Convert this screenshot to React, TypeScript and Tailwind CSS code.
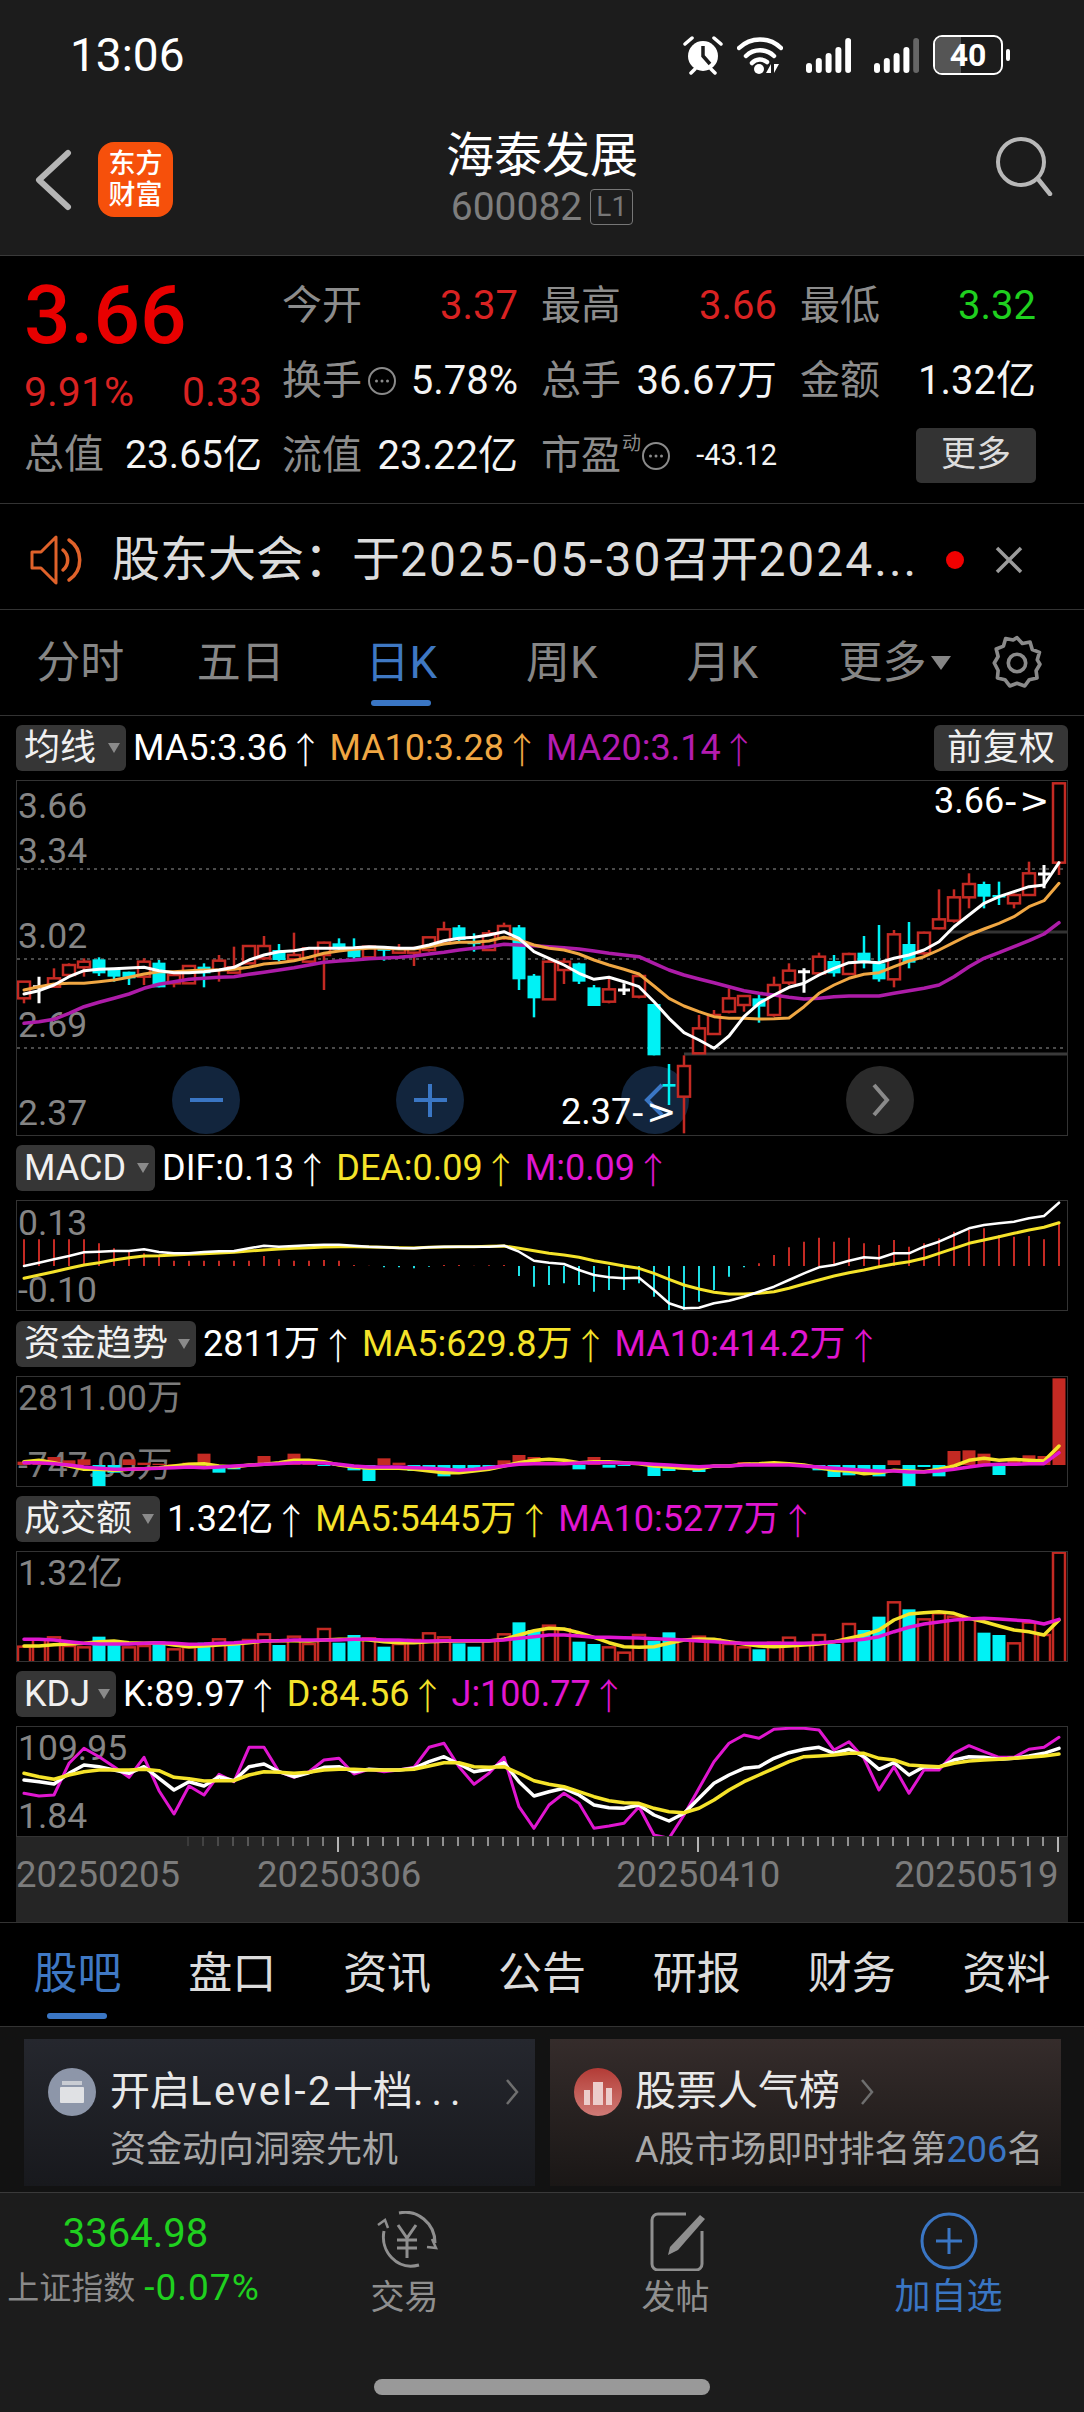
import React from 'react';

const BLUE = '#3a76c4';
const RED = '#c42a23';
const CYAN = '#00f2f5';
const YELLOW = '#f5e32a';
const MAGENTA = '#e016d0';

const xAt = (i: number) => 23 + 15 * i;
const line = (ys: number[], toY: (v: number) => number) =>
  ys.map((v, i) => `${xAt(i)},${toY(v).toFixed(1)}`).join(' ');

// k-line values measured from the reference: [high, bodyTop, bodyBottom, low, type]
type Candle = [number, number, number, number, 'r' | 'c' | 'w'];
const candlesA: Candle[] = [
  [305, 305, 355, 370, 'r'], [290, 320, 320, 370, 'w'], [265, 295, 320, 320, 'r'], [250, 255, 285, 290, 'r'],
  [235, 245, 262, 290, 'r'], [232, 238, 280, 288, 'c'], [265, 270, 290, 305, 'c'], [275, 275, 295, 315, 'c'],
  [235, 245, 290, 315, 'r'], [240, 248, 322, 322, 'c'], [275, 285, 310, 322, 'r'], [255, 258, 310, 310, 'r'],
  [250, 260, 280, 322, 'c'], [225, 242, 270, 305, 'r'], [200, 262, 278, 280, 'r'], [198, 198, 250, 250, 'r'],
  [168, 198, 235, 240, 'r'], [192, 210, 240, 245, 'c'], [158, 225, 238, 240, 'r'], [205, 205, 245, 245, 'r'],
  [185, 188, 225, 330, 'r'], [175, 190, 208, 215, 'c'], [175, 205, 232, 238, 'c'], [200, 200, 232, 232, 'r'],
  [200, 205, 212, 242, 'c'], [192, 205, 218, 220, 'r'], [200, 205, 218, 258, 'r'], [170, 172, 210, 215, 'r'],
  [125, 148, 190, 190, 'r'], [135, 142, 180, 185, 'c'], [160, 185, 192, 215, 'c'], [150, 160, 210, 212, 'r'],
  [128, 138, 175, 180, 'r'], [135, 142, 298, 330, 'c'], [282, 287, 355, 412, 'c'],
];
const candlesB: Candle[] = [
  [535, 545, 658, 660, 'r'], [535, 545, 570, 612, 'r'], [548, 550, 605, 612, 'c'], [615, 622, 678, 678, 'c'],
  [590, 628, 665, 670, 'r'], [610, 630, 630, 645, 'w'], [585, 588, 650, 655, 'r'], [672, 672, 826, 826, 'c'],
  [852, 912, 920, 975, 'c'], [826, 858, 950, 1060, 'r'], [705, 745, 820, 820, 'r'], [690, 705, 762, 765, 'r'],
  [625, 655, 695, 700, 'r'], [645, 648, 675, 695, 'r'], [645, 655, 680, 728, 'c'], [590, 615, 705, 710, 'r'],
  [550, 572, 608, 615, 'r'], [565, 575, 575, 638, 'w'], [518, 530, 580, 582, 'r'], [525, 543, 580, 590, 'c'],
  [518, 522, 582, 585, 'r'], [468, 518, 545, 565, 'c'], [435, 550, 598, 605, 'c'], [450, 463, 598, 622, 'r'],
  [426, 492, 548, 565, 'c'], [455, 458, 520, 525, 'r'], [328, 418, 445, 448, 'r'], [328, 352, 422, 428, 'r'],
  [280, 312, 352, 385, 'r'], [305, 312, 350, 385, 'c'], [305, 345, 352, 375, 'c'], [340, 345, 370, 385, 'r'],
  [245, 280, 345, 348, 'r'], [255, 282, 282, 325, 'w'], [10, 10, 248, 285, 'r'],
];
const ka = (z: number) => 880 + z / 3;
const kb = (z: number) => 780 + z / 3;
const toFull = (c: Candle, f: (z: number) => number): Candle => [f(c[0]), f(c[1]), f(c[2]), f(c[3]), c[4]];
const candles: Candle[] = [...candlesA.map((c) => toFull(c, ka)), ...candlesB.map((c) => toFull(c, kb))];

const join = (a: number[], b: number[]) => [...a.map(ka), ...b.map(kb)];
const ma5 = join(
  [342, 332, 315, 290, 272, 268, 266, 264, 262, 272, 278, 278, 275, 270, 262, 240, 225, 215, 212, 205, 205, 205, 203, 200, 202, 205, 205, 195, 182, 175, 172, 165, 155, 175, 215],
  [535, 555, 580, 598, 592, 605, 620, 665, 715, 758, 780, 805, 768, 710, 670, 645, 622, 610, 585, 565, 548, 545, 548, 535, 525, 510, 485, 440, 405, 370, 350, 335, 320, 315, 248],
);
const ma10 = join(
  [330, 320, 312, 310, 310, 305, 300, 292, 282, 275, 275, 272, 270, 270, 268, 262, 252, 248, 242, 232, 220, 213, 208, 205, 205, 207, 207, 200, 192, 187, 187, 183, 172, 180, 195],
  [505, 510, 522, 540, 555, 568, 582, 618, 655, 678, 695, 710, 715, 715, 717, 716, 714, 680, 640, 615, 595, 583, 578, 560, 543, 530, 510, 487, 465, 447, 430, 410, 380, 362, 310],
);
const ma20 = join(
  [430, 425, 418, 400, 380, 367, 355, 342, 325, 313, 305, 298, 295, 292, 290, 283, 277, 270, 263, 255, 247, 243, 240, 236, 234, 232, 228, 222, 217, 210, 205, 200, 193, 195, 197],
  [500, 503, 507, 513, 520, 525, 530, 550, 570, 585, 597, 608, 620, 632, 640, 645, 652, 657, 655, 650, 648, 648, 648, 640, 632, 625, 615, 590, 560, 535, 518, 500, 482, 462, 428],
);

const y3 = (z: number) => 1140 + z / 3;
const y4 = (z: number) => 1540 + z / 3;
const same = (v: number) => v;

const macdBars = [298, 298, 298, 298, 298, 310, 325, 335, 340, 350, 362, 362, 362, 362, 362, 362, 348, 358, 362, 362, 360, 362, 375, 377, 382, 382, 385, 380, 375, 375, 377, 376, 375, 408, 440, 435, 430, 435, 455, 450, 450, 430, 470, 515, 515, 485, 450, 410, 382, 370, 345, 322, 305, 293, 305, 293, 310, 315, 300, 320, 310, 295, 275, 270, 265, 285, 290, 288, 298, 250];
const macdDif = [378, 368, 358, 348, 337, 335, 333, 333, 328, 336, 340, 340, 336, 334, 333, 325, 317, 320, 318, 316, 314, 314, 317, 320, 322, 324, 325, 322, 320, 320, 320, 320, 317, 335, 362, 368, 372, 390, 405, 412, 415, 413, 450, 490, 505, 503, 490, 482, 470, 455, 440, 420, 400, 382, 375, 362, 352, 355, 340, 340, 320, 305, 285, 265, 255, 250, 245, 235, 228, 188];
const macdDea = [415, 405, 395, 385, 375, 368, 360, 353, 348, 347, 345, 343, 341, 339, 337, 333, 330, 327, 325, 323, 321, 320, 320, 321, 322, 323, 324, 322, 321, 320, 320, 319, 318, 325, 332, 340, 345, 352, 362, 370, 378, 385, 400, 418, 435, 447, 457, 462, 462, 460, 455, 445, 432, 420, 408, 398, 390, 380, 372, 365, 355, 340, 325, 310, 300, 290, 280, 270, 262, 248];

const fundBars = [962, 955, 948, 958, 955, 1043, 995, 955, 965, 968, 970, 965, 938, 995, 985, 975, 945, 965, 938, 955, 975, 975, 988, 1020, 952, 965, 990, 992, 1006, 995, 990, 985, 958, 942, 948, 965, 965, 985, 948, 980, 975, 965, 1005, 990, 985, 993, 980, 975, 963, 965, 975, 965, 975, 988, 1008, 1003, 985, 1006, 958, 1040, 978, 1006, 930, 928, 938, 1002, 955, 943, 945, 712];
const fundMa5 = [962, 958, 965, 975, 985, 985, 988, 985, 983, 980, 975, 970, 968, 975, 978, 972, 970, 965, 958, 958, 962, 972, 978, 982, 982, 982, 985, 990, 995, 995, 990, 985, 975, 965, 958, 955, 958, 965, 962, 962, 965, 968, 975, 978, 982, 983, 975, 975, 970, 968, 965, 968, 972, 980, 988, 990, 998, 995, 988, 990, 992, 985, 975, 958, 952, 958, 955, 958, 960, 915];
const fundMa10 = [965, 965, 968, 972, 978, 982, 985, 985, 983, 982, 980, 978, 980, 978, 975, 973, 970, 968, 965, 965, 966, 970, 975, 978, 978, 978, 980, 982, 985, 988, 985, 980, 975, 970, 968, 968, 968, 966, 965, 965, 966, 967, 970, 972, 975, 977, 975, 975, 972, 972, 972, 972, 975, 978, 982, 985, 988, 990, 990, 993, 993, 990, 985, 978, 972, 970, 970, 968, 968, 935];

const amountBars: [number, 'r' | 'c'][] = [
  [320, 'r'], [298, 'r'], [292, 'r'], [318, 'r'], [322, 'r'], [290, 'c'], [315, 'c'], [322, 'r'], [318, 'r'], [305, 'c'],
  [328, 'r'], [322, 'r'], [308, 'c'], [298, 'r'], [315, 'c'], [300, 'r'], [283, 'r'], [315, 'c'], [290, 'r'], [312, 'r'],
  [267, 'r'], [308, 'c'], [285, 'c'], [295, 'r'], [320, 'c'], [312, 'r'], [300, 'r'], [280, 'r'], [292, 'r'], [310, 'c'],
  [320, 'c'], [302, 'r'], [283, 'r'], [247, 'c'], [270, 'c'], [257, 'r'], [268, 'r'], [305, 'c'], [312, 'c'], [322, 'r'],
  [338, 'r'], [285, 'r'], [302, 'c'], [277, 'c'], [300, 'r'], [290, 'r'], [298, 'r'], [312, 'r'], [322, 'r'], [328, 'c'],
  [308, 'r'], [293, 'r'], [312, 'r'], [285, 'r'], [312, 'c'], [252, 'r'], [270, 'c'], [230, 'c'], [187, 'r'], [208, 'c'],
  [238, 'r'], [220, 'r'], [230, 'r'], [235, 'r'], [278, 'c'], [285, 'c'], [310, 'r'], [248, 'r'], [285, 'r'], [38, 'r'],
];
const amountMa5 = [318, 318, 314, 312, 310, 305, 303, 308, 310, 308, 315, 320, 318, 315, 312, 308, 303, 302, 302, 303, 300, 298, 298, 300, 305, 308, 308, 305, 304, 303, 303, 303, 298, 285, 272, 265, 267, 278, 292, 308, 320, 322, 320, 310, 300, 297, 298, 305, 312, 318, 320, 318, 315, 312, 305, 295, 285, 270, 240, 222, 218, 215, 220, 235, 245, 258, 270, 275, 285, 240];
const amountMa10 = [298, 298, 300, 305, 310, 312, 312, 312, 310, 308, 310, 313, 312, 310, 308, 305, 303, 302, 300, 300, 300, 300, 298, 298, 300, 300, 302, 303, 302, 302, 302, 302, 300, 295, 290, 285, 285, 288, 292, 292, 293, 294, 296, 298, 300, 303, 305, 308, 310, 310, 310, 310, 310, 308, 305, 302, 298, 290, 275, 262, 252, 246, 240, 237, 235, 237, 240, 243, 252, 238];

const kdjK = [720, 725, 732, 700, 675, 680, 690, 700, 680, 715, 750, 725, 738, 710, 722, 680, 672, 695, 710, 698, 682, 680, 695, 688, 690, 690, 685, 665, 650, 672, 695, 688, 668, 725, 768, 755, 745, 765, 795, 803, 805, 795, 825, 843, 820, 775, 730, 705, 685, 680, 655, 638, 628, 622, 640, 628, 650, 688, 668, 705, 680, 682, 660, 650, 652, 658, 655, 648, 640, 625];
const kdjD = [700, 710, 718, 705, 695, 690, 690, 690, 688, 692, 712, 716, 723, 722, 722, 705, 695, 697, 700, 697, 690, 688, 688, 690, 690, 690, 688, 678, 668, 668, 680, 682, 680, 700, 722, 733, 740, 755, 770, 782, 788, 790, 805, 815, 818, 805, 780, 750, 725, 705, 685, 665, 650, 648, 645, 640, 640, 655, 660, 675, 678, 680, 670, 663, 660, 658, 655, 652, 648, 642];
const kdjJ = [760, 768, 765, 670, 625, 650, 680, 712, 652, 752, 822, 738, 765, 703, 725, 622, 622, 695, 712, 695, 660, 655, 702, 688, 695, 690, 682, 622, 610, 680, 733, 700, 652, 800, 865, 795, 760, 790, 865, 858, 850, 800, 885, 895, 825, 745, 665, 610, 585, 595, 568, 565, 565, 570, 630, 605, 655, 750, 680, 760, 690, 690, 640, 617, 635, 652, 652, 628, 622, 592];

function Poly({ ys, toY = same, color, width = 2.5 }: { ys: number[]; toY?: (v: number) => number; color: string; width?: number }) {
  return <polyline points={line(ys, toY)} fill="none" stroke={color} strokeWidth={width} strokeLinejoin="round" strokeLinecap="round" />;
}

function Arrow({ color }: { color: string }) {
  return <span className="font-['Noto_Sans_CJK_SC'] font-light" style={{ color }}>↑</span>;
}

function Legend({ label, width, items }: { label: string; width: string; items: { text: string; color: string }[] }) {
  return (
    <div className="flex items-center h-[46px] pl-[16px] text-[36px]">
      <div className={`${width} h-[46px] rounded-[6px] bg-[#363636] flex items-center justify-between pl-[8px] pr-[5px] text-[#f0f0f0]`}>
        <span>{label}</span>
        <svg width="14" height="12" viewBox="0 0 14 12"><path d="M1 1h12L7 11z" fill="#8a8a8a" /></svg>
      </div>
      <div className="flex items-center gap-[6px] ml-[7px] whitespace-nowrap">
        {items.map((it) => (
          <div key={it.text} className="flex" style={{ color: it.color }}>
            <span>{it.text}</span>
            <Arrow color={it.color} />
          </div>
        ))}
      </div>
    </div>
  );
}

function AxisLabel({ top, text, color = 'text-[#858585]' }: { top: string; text: string; color?: string }) {
  return <span className={`absolute ${top} left-[1px] ${color} text-[35.5px] leading-[40px] whitespace-nowrap`}>{text}</span>;
}

function PriceTag({ pos, price }: { pos: string; price: string }) {
  return (
    <span className={`absolute ${pos} text-white text-[36px] leading-[40px] whitespace-nowrap`}>
      {price}
      <span className="font-['DejaVu_Sans'] font-normal tracking-[2px]">-&gt;</span>
    </span>
  );
}

function SubChart({ top, children, labels }: { top: number; children: React.ReactNode; labels: React.ReactNode }) {
  return (
    <div className="relative mx-[16px] mt-[9px] h-[111px] border border-[#333] bg-black overflow-hidden">
      {labels}
      <svg className="absolute inset-0" width="1052" height="111" viewBox={`16 ${top} 1052 111`}>
        {children}
      </svg>
    </div>
  );
}

function InfoDot() {
  return (
    <svg width="30" height="30" viewBox="0 0 30 30">
      <circle cx="15" cy="15" r="13" fill="none" stroke="#8a8a8a" strokeWidth="2" />
      <circle cx="9.5" cy="15" r="1.5" fill="#8a8a8a" />
      <circle cx="15" cy="15" r="1.5" fill="#8a8a8a" />
      <circle cx="20.5" cy="15" r="1.5" fill="#8a8a8a" />
    </svg>
  );
}

function Cell({ label, value, valueCls = 'text-[#f4f4f4]', extra }: { label: string; value: string; valueCls?: string; extra?: React.ReactNode }) {
  return (
    <div className="flex items-center justify-between h-[75px]">
      <div className="flex items-center gap-[5px]">
        <span className="text-[40px] text-[#8c8c8c]">{label}</span>
        {extra}
      </div>
      <span className={`text-[40px] ${valueCls}`}>{value}</span>
    </div>
  );
}

function Bars({ bars, last = '#fff' }: { bars: number[]; last?: string }) {
  return (
    <svg width="46" height="37" viewBox="0 0 46 37">
      {bars.map((h, i) => (
        <rect key={i} x={1 + i * 9.8} y={36 - h} width="6" height={h} rx="3" fill={i === 4 ? last : '#fff'} />
      ))}
    </svg>
  );
}

function StatusIcons() {
  return (
    <div className="flex items-center pr-[74px]">
      {/* alarm */}
      <svg width="40" height="40" viewBox="0 0 40 40" className="mr-[14px]">
        <circle cx="20" cy="21" r="15" fill="#fff" />
        <path d="M20 11v10l7 8" fill="none" stroke="#1c1c1c" strokeWidth="3.5" />
        <path d="M2 9l7-6M38 9l-7-6M8 38l4-4M32 38l-4-4" stroke="#fff" strokeWidth="3.5" strokeLinecap="round" />
      </svg>
      {/* wifi */}
      <svg width="46" height="38" viewBox="0 0 46 38" className="mr-[22px]">
        <path d="M2 12a30 30 0 0 1 42 0M9 20a20 20 0 0 1 28 0M15 27a11 11 0 0 1 15-1" fill="none" stroke="#fff" strokeWidth="4.5" strokeLinecap="round" />
        <circle cx="22" cy="33" r="5" fill="#fff" />
        <path d="M34 37v-9l-5 9zM37 28v9l5-9z" fill="#fff" />
      </svg>
      {/* signal */}
      <div className="mr-[22px]"><Bars bars={[10, 15, 20, 26, 35]} /></div>
      <div className="mr-[14px]"><Bars bars={[10, 15, 20, 26, 35]} last="#666" /></div>
      {/* battery */}
      <div className="relative w-[70px] h-[40px] rounded-[9px] border-[2.5px] border-white flex items-center justify-center overflow-hidden">
        <div className="absolute left-0 top-0 bottom-0 w-[26px] bg-[#555]" />
        <span className="relative text-[32px] font-bold text-white leading-none">40</span>
      </div>
      <div className="ml-[3px] w-[4px] h-[12px] rounded-full bg-white" />
    </div>
  );
}

function RoundButtons() {
  return (
    <g>
      <circle cx="205" cy="1100" r="34" fill="#12253d" />
      <path d="M189 1100h33" stroke={BLUE} strokeWidth="4" />
      <circle cx="429" cy="1100" r="34" fill="#12253d" />
      <path d="M413 1100h33M429 1084v33" stroke={BLUE} strokeWidth="4" />
      <circle cx="654" cy="1100" r="34" fill="#12253d" />
      <path d="M661 1085l-15 15 15 15" fill="none" stroke={BLUE} strokeWidth="4" />
      <circle cx="879" cy="1100" r="34" fill="#2a2a2a" />
      <path d="M873 1085l13 15-13 15" fill="none" stroke="#8a8a8a" strokeWidth="4" />
    </g>
  );
}

function CandleChart() {
  return (
    <div className="relative mx-[16px] h-[356px] border border-[#333] bg-black overflow-hidden">
      <AxisLabel top="top-[5px]" text="3.66" />
      <AxisLabel top="top-[50px]" text="3.34" />
      <AxisLabel top="top-[135px]" text="3.02" />
      <AxisLabel top="top-[224px]" text="2.69" />
      <AxisLabel top="top-[312px]" text="2.37" />
      <svg className="absolute inset-0" width="1052" height="356" viewBox="16 781 1052 356">
        {[869, 959, 1048].map((y) => (
          <line key={y} x1="16" x2="1068" y1={y} y2={y} stroke="#4a4a4a" strokeWidth="2" strokeDasharray="3 4" />
        ))}
        <line x1="946" x2="1068" y1="932" y2="932" stroke="#333" strokeWidth="3" />
        <line x1="683" x2="1068" y1="1054" y2="1054" stroke="#3a3a3a" strokeWidth="3" />
        <RoundButtons />
        {candles.map(([hi, top, bottom, lo, kind], i) => {
          const x = xAt(i);
          if (kind === 'w') {
            return <path key={i} d={`M${x} ${hi}V${lo}M${x - 6} ${top}h12`} stroke="#fff" strokeWidth="3" />;
          }
          const color = kind === 'r' ? RED : CYAN;
          return (
            <g key={i}>
              <line x1={x} x2={x} y1={hi} y2={lo} stroke={color} strokeWidth="2.5" />
              {kind === 'r' ? (
                <rect x={x - 6} y={top} width="12" height={Math.max(bottom - top, 2)} fill="#000" stroke={RED} strokeWidth="2.5" />
              ) : (
                <rect x={x - 6.5} y={top} width="13" height={Math.max(bottom - top, 2.5)} fill={CYAN} />
              )}
            </g>
          );
        })}
        <Poly ys={ma20} color="#ad1ca8" width={3.5} />
        <Poly ys={ma10} color="#f0a743" width={3} />
        <Poly ys={ma5} color="#ffffff" width={3} />
      </svg>
      <PriceTag pos="top-[0px] left-[917px]" price="3.66" />
      <PriceTag pos="top-[311px] left-[544px]" price="2.37" />
    </div>
  );
}

function TimeAxis() {
  const ticks = Array.from({ length: 59 }, (_, k) => k + 11);
  return (
    <div className="mx-[16px] h-[85px] bg-[#252525] overflow-hidden">
      <svg className="block" width="1052" height="16" viewBox="16 0 1052 16">
        {ticks.map((i) => {
          const long = i === 21 || i === 45 || i === 69;
          return (
            <line key={i} x1={xAt(i)} x2={xAt(i)} y1="0" y2={long ? 15 : 9} stroke="#b5b5b5" strokeWidth="2" opacity={i < 21 ? 0.15 + (i - 11) * 0.05 : long ? 1 : 0.75} />
          );
        })}
      </svg>
      <div className="flex text-[36.5px] leading-[44px] text-[#7c7c7c]">
        <span>20250205</span>
        <span className="ml-[77px]">20250306</span>
        <span className="ml-[195px]">20250410</span>
        <span className="ml-[114px]">20250519</span>
      </div>
    </div>
  );
}

export default function App() {
  return (
    <div className="w-[1084px] h-[2412px] bg-black overflow-hidden font-['Roboto','Noto_Sans_CJK_SC',sans-serif]">
      {/* Header */}
      <div className="h-[256px] bg-[#1c1c1c] border-b border-[#3a3a3a]">
        <div className="h-[110px] flex items-center justify-between pl-[70px]">
          <span className="text-[46px] text-white">13:06</span>
          <StatusIcons />
        </div>
        <div className="h-[145px] grid grid-cols-[1fr_auto_1fr] items-start">
          <div className="flex items-center pl-[35px] pt-[32px]">
            <svg width="38" height="62" viewBox="0 0 38 62">
              <path d="M33 4L4 31l29 27" fill="none" stroke="#b5b5b5" strokeWidth="6" strokeLinecap="round" strokeLinejoin="round" />
            </svg>
            <div className="ml-[25px] w-[75px] h-[75px] rounded-[16px] bg-[#f6500b] flex flex-col items-center justify-center text-white text-[27px] leading-[31px] font-medium">
              <span>东方</span>
              <span>财富</span>
            </div>
          </div>
          <div className="flex flex-col items-center pt-[19px]">
            <span className="text-[48px] leading-[54px] text-white">海泰发展</span>
            <div className="flex items-center mt-[1px] gap-[8px]">
              <span className="text-[39px] leading-[46px] text-[#7d7d7d]">600082</span>
              <span className="w-[43px] h-[36px] border border-[#777] rounded-[4px] text-[28px] leading-[34px] text-center text-[#777]">L1</span>
            </div>
          </div>
          <div className="flex justify-end pr-[30px] pt-[26px]">
            <svg width="60" height="60" viewBox="0 0 60 60">
              <circle cx="27" cy="26" r="23" fill="none" stroke="#b8b8b8" strokeWidth="4" />
              <path d="M44 43l12 15" stroke="#b8b8b8" strokeWidth="4.5" strokeLinecap="round" />
            </svg>
          </div>
        </div>
      </div>

      {/* Quote */}
      <div className="h-[248px] border-b border-[#333] flex pl-[24px]">
        <div className="w-[258px] shrink-0">
          <div className="mt-[18px] text-[82px] leading-[82px] font-medium text-[#e80000]">3.66</div>
          <div className="mt-[13px] pr-[20px] flex justify-between text-[41px] leading-[46px] text-[#d92222]">
            <span>9.91%</span>
            <span>0.33</span>
          </div>
          <div className="mt-[17px] pr-[20px] flex justify-between items-center h-[46px]">
            <span className="text-[40px] text-[#8c8c8c]">总值</span>
            <span className="text-[39px] text-[#f4f4f4]">23.65亿</span>
          </div>
        </div>
        <div className="pt-[12px] grid grid-cols-[236px_236px_236px] gap-x-[23px] content-start">
          <Cell label="今开" value="3.37" valueCls="text-[#d92222]" />
          <Cell label="最高" value="3.66" valueCls="text-[#d92222]" />
          <Cell label="最低" value="3.32" valueCls="text-[#1fd01f]" />
          <Cell label="换手" value="5.78%" extra={<InfoDot />} />
          <Cell label="总手" value="36.67万" />
          <Cell label="金额" value="1.32亿" />
          <Cell label="流值" value="23.22亿" />
          <div className="flex items-center justify-between h-[75px]">
            <div className="flex items-center">
              <span className="text-[40px] text-[#8c8c8c]">市盈</span>
              <span className="text-[19px] text-[#8c8c8c] self-start mt-[4px] ml-[1px]">动</span>
              <InfoDot />
            </div>
            <span className="text-[29px] text-[#f4f4f4]">-43.12</span>
          </div>
          <div className="flex items-center justify-end h-[75px]">
            <span className="w-[120px] h-[55px] rounded-[5px] bg-[#333] flex items-center justify-center text-[35px] text-[#ddd]">更多</span>
          </div>
        </div>
      </div>

      {/* Notice */}
      <div className="h-[106px] border-b border-[#333] flex items-center pl-[30px] pt-[6px]">
        <svg width="52" height="56" viewBox="0 0 52 56" className="shrink-0">
          <path d="M2 20h9L26 5v46L11 36H2z" fill="none" stroke="#e0622a" strokeWidth="3" strokeLinejoin="round" />
          <path d="M33 18a13 13 0 0 1 0 20M39 8a24 24 0 0 1 0 40" fill="none" stroke="#e0622a" strokeWidth="3.5" strokeLinecap="round" />
        </svg>
        <span className="ml-[30px] w-[806px] text-[48px] text-[#dcdcdc] whitespace-nowrap">
          股东大会：于<span className="tracking-[2px]">2025-05-30</span>召开<span className="tracking-[2px]">2024...</span>
        </span>
        <span className="ml-[28px] w-[18px] h-[18px] rounded-full bg-[#f00000]" />
        <svg width="30" height="30" viewBox="0 0 30 30" className="ml-[30px]">
          <path d="M3 3l24 24M27 3L3 27" stroke="#9a9a9a" strokeWidth="3.5" />
        </svg>
      </div>

      {/* Period tabs */}
      <div className="h-[106px] border-b border-[#333] flex items-center text-[44px] text-[#868686]">
        {['分时', '五日', '日K', '周K', '月K'].map((t) => (
          <div key={t} className="relative w-[160.5px] h-full flex items-center justify-center">
            <span className={t === '日K' ? 'text-[#3f78c3]' : ''}>{t}</span>
            {t === '日K' && <span className="absolute left-[50px] bottom-[9px] w-[60px] h-[6px] rounded-[3px] bg-[#3a76c4]" />}
          </div>
        ))}
        <div className="ml-[36px] flex items-center">
          <span>更多</span>
          <svg width="22" height="16" viewBox="0 0 22 16" className="ml-[3px]"><path d="M1 1h20L11 15z" fill="#868686" /></svg>
        </div>
        <svg width="58" height="58" viewBox="0 0 24 24" className="ml-[36px]" fill="none" stroke="#8a8a8a" strokeWidth="1.5">
          <path d="M12 1.5l2.2 2.4 3.2-.6.9 3.1 3 1.2-.9 3.1 1.1 1.8-1.6 2.7.4 3-3.2.7-1.9 2.6-3.2-1.1-3 1.1-2-2.6-3.1-.7.3-3.1L2.6 12l1.6-2.7-.8-3.1 3-1.2.9-3.1 3.1.6z" strokeLinejoin="round" />
          <circle cx="12" cy="12" r="3.6" />
        </svg>
      </div>

      {/* K-line */}
      <div className="flex items-center justify-between h-[46px] mt-[9px] pr-[16px]">
        <Legend
          label="均线"
          width="w-[110px]"
          items={[
            { text: 'MA5:3.36', color: '#ffffff' },
            { text: 'MA10:3.28', color: '#f0a743' },
            { text: 'MA20:3.14', color: '#b41cb0' },
          ]}
        />
        <span className="w-[134px] h-[46px] rounded-[6px] bg-[#363636] flex items-center justify-center text-[36px] text-[#f0f0f0]">前复权</span>
      </div>
      <div className="h-[9px]" />
      <CandleChart />

      <div className="h-[9px]" />
      <Legend
        label="MACD"
        width="w-[139px]"
        items={[
          { text: 'DIF:0.13', color: '#ffffff' },
          { text: 'DEA:0.09', color: YELLOW },
          { text: 'M:0.09', color: MAGENTA },
        ]}
      />
      <SubChart
        top={1201}
        labels={
          <>
            <AxisLabel top="top-[2px]" text="0.13" />
            <AxisLabel top="top-[69px]" text="-0.10" />
          </>
        }
      >
        {macdBars.map((v, i) => (
          <line key={i} x1={xAt(i)} x2={xAt(i)} y1={y3(378)} y2={y3(v)} stroke={v < 378 ? RED : '#1fe0e6'} strokeWidth="2" />
        ))}
        <Poly ys={macdDea} toY={y3} color={YELLOW} width={3} />
        <Poly ys={macdDif} toY={y3} color="#ffffff" width={2.5} />
      </SubChart>

      <div className="h-[10px]" />
      <Legend
        label="资金趋势"
        width="w-[180px]"
        items={[
          { text: '2811万', color: '#ffffff' },
          { text: 'MA5:629.8万', color: YELLOW },
          { text: 'MA10:414.2万', color: MAGENTA },
        ]}
      />
      <SubChart
        top={1376}
        labels={
          <>
            <AxisLabel top="top-[1px]" text="2811.00万" color="text-[#7c7c7c]" />
            <AxisLabel top="top-[68px]" text="-747.00万" color="text-[#7c7c7c]" />
          </>
        }
      >
        {fundBars.map((v, i) => {
          const up = v < 972;
          const a = y3(Math.min(v, 972));
          const b = y3(Math.max(v, 972));
          return <rect key={i} x={xAt(i) - 6.5} y={a} width="13" height={b - a} fill={up ? RED : CYAN} />;
        })}
        <Poly ys={fundMa5} toY={y3} color={YELLOW} width={3.5} />
        <Poly ys={fundMa10} toY={y3} color={MAGENTA} width={3.5} />
      </SubChart>

      <div className="h-[9px]" />
      <Legend
        label="成交额"
        width="w-[144px]"
        items={[
          { text: '1.32亿', color: '#ffffff' },
          { text: 'MA5:5445万', color: YELLOW },
          { text: 'MA10:5277万', color: MAGENTA },
        ]}
      />
      <SubChart top={1552} labels={<AxisLabel top="top-[1px]" text="1.32亿" />}>
        {amountBars.map(([v, kind], i) => {
          const top = y4(v);
          const bottom = y4(368);
          return kind === 'r' ? (
            <rect key={i} x={xAt(i) - 6} y={top} width="12" height={bottom - top} fill="none" stroke={RED} strokeWidth="2.5" />
          ) : (
            <rect key={i} x={xAt(i) - 6.5} y={top} width="13" height={bottom - top} fill={CYAN} />
          );
        })}
        <Poly ys={amountMa5} toY={y4} color={YELLOW} width={3.5} />
        <Poly ys={amountMa10} toY={y4} color={MAGENTA} width={3.5} />
      </SubChart>

      <div className="h-[9px]" />
      <Legend
        label="KDJ"
        width="w-[100px]"
        items={[
          { text: 'K:89.97', color: '#ffffff' },
          { text: 'D:84.56', color: YELLOW },
          { text: 'J:100.77', color: MAGENTA },
        ]}
      />
      <SubChart
        top={1727}
        labels={
          <>
            <AxisLabel top="top-[1px]" text="109.95" />
            <AxisLabel top="top-[69px]" text="1.84" />
          </>
        }
      >
        <Poly ys={kdjJ} toY={y4} color={MAGENTA} width={3} />
        <Poly ys={kdjK} toY={y4} color="#ffffff" width={3.5} />
        <Poly ys={kdjD} toY={y4} color={YELLOW} width={3.5} />
      </SubChart>
      <TimeAxis />

      {/* Content tabs */}
      <div className="relative h-[105px] border-t border-b border-[#333] grid grid-cols-7 text-[44px] text-[#dcdcdc]">
        {['股吧', '盘口', '资讯', '公告', '研报', '财务', '资料'].map((t, i) => (
          <div key={t} className={`flex justify-center pt-[24px] leading-[54px] ${i === 0 ? 'text-[#3f78c3]' : ''}`}>{t}</div>
        ))}
        <span className="absolute left-[47px] top-[90px] w-[60px] h-[6px] rounded-[3px] bg-[#3a76c4]" />
      </div>

      {/* Banners */}
      <div className="h-[165px] bg-[#121212] flex gap-[15px] pl-[24px] pt-[12px]">
        <div className="w-[511px] h-[147px] bg-gradient-to-b from-[#25272e] to-[#18191d] pt-[29px] pl-[24px]">
          <div className="flex items-center h-[48px]">
            <span className="w-[48px] h-[48px] rounded-full bg-[#8d96a9] flex items-center justify-center">
              <svg width="26" height="22" viewBox="0 0 26 22">
                <rect x="3" y="0" width="20" height="4" fill="#c9ccd3" />
                <rect x="1" y="6" width="24" height="16" rx="1" fill="#e0e1e4" />
              </svg>
            </span>
            <span className="ml-[14px] w-[395px] text-[40px] text-[#e8e8e8] whitespace-nowrap">
              开启<span className="tracking-[2.4px]">Level-2</span>十档<span className="tracking-[8px]">...</span>
            </span>
            <svg width="14" height="28" viewBox="0 0 14 28"><path d="M2 2l10 12L2 26" fill="none" stroke="#6f6f6f" strokeWidth="2.5" /></svg>
          </div>
          <div className="mt-[12px] pl-[62px] text-[36px] leading-[44px] text-[#a8a8a8]">资金动向洞察先机</div>
        </div>
        <div className="w-[511px] h-[147px] bg-gradient-to-b from-[#352c2b] to-[#1a1716] pt-[29px] pl-[24px]">
          <div className="flex items-center h-[48px]">
            <span className="w-[48px] h-[48px] rounded-full bg-gradient-to-b from-[#b33b36] to-[#cf7a76] flex items-center justify-center">
              <svg width="28" height="26" viewBox="0 0 28 26">
                <path d="M0 11h6v15H0zM9 3h10v23H9zM22 9h6v17h-6z" fill="#eccdcb" />
              </svg>
            </span>
            <span className="ml-[13px] text-[41px] text-[#e8e8e8] whitespace-nowrap">股票人气榜</span>
            <svg width="14" height="28" viewBox="0 0 14 28" className="ml-[20px]"><path d="M2 2l10 12L2 26" fill="none" stroke="#6f6f6f" strokeWidth="2.5" /></svg>
          </div>
          <div className="mt-[12px] pl-[61px] text-[36px] leading-[44px] text-[#a8a8a8] whitespace-nowrap">
            A股市场即时排名第<span className="text-[#3a76c4]">206</span>名
          </div>
        </div>
      </div>

      {/* Bottom bar */}
      <div className="relative h-[220px] bg-[#1c1c1c] border-t border-[#3a3a3a] grid grid-cols-4">
        <div className="flex flex-col items-center pt-[18px]">
          <span className="text-[40px] leading-[46px] text-[#1fd01f]">3364.98</span>
          <div className="mt-[9px] -ml-[4px] flex items-center whitespace-nowrap leading-[44px]">
            <span className="text-[32px] text-[#8a8a8a]">上证指数</span>
            <span className="ml-[9px] text-[37px] tracking-[1px] text-[#1fd01f]">-0.07%</span>
          </div>
        </div>
        <div className="flex flex-col items-center pt-[18px]">
          <svg width="64" height="60" viewBox="0 0 64 60" fill="none" stroke="#8f8f8f" strokeWidth="3">
            <path d="M9 20C5 40 22 60 44 54M24 2C42 -2 60 12 60 32" />
            <path d="M3 14l7-5 3 8M52 36l9 1-4-9" strokeWidth="2.5" />
            <path d="M23 14l9 13 9-13M32 27v20M22 29h20M22 37h20" />
          </svg>
          <span className="mt-[4px] -ml-[4px] text-[34px] leading-[44px] text-[#8f8f8f]">交易</span>
        </div>
        <div className="flex flex-col items-center pt-[18px]">
          <svg width="60" height="60" viewBox="0 0 60 60" fill="none" stroke="#8f8f8f" strokeWidth="3">
            <path d="M38 3H10a6 6 0 0 0-6 6v44a6 6 0 0 0 6 6h38a6 6 0 0 0 6-6V20" />
            <path d="M22 36L52 4l5 4-27 31-10 5z" fill="#8f8f8f" stroke="none" />
          </svg>
          <span className="mt-[4px] -ml-[4px] text-[34px] leading-[44px] text-[#8f8f8f]">发帖</span>
        </div>
        <div className="flex flex-col items-center pt-[18px]">
          <svg width="60" height="60" viewBox="0 0 60 60" fill="none" stroke={BLUE} strokeWidth="3">
            <circle cx="30" cy="30" r="27" />
            <path d="M17 30h26M30 17v26" />
          </svg>
          <span className="mt-[4px] text-[36px] leading-[44px] text-[#3a76c4]">加自选</span>
        </div>
        <span className="absolute left-[374px] top-[186px] w-[336px] h-[16px] rounded-[8px] bg-[#999]" />
      </div>
    </div>
  );
}
